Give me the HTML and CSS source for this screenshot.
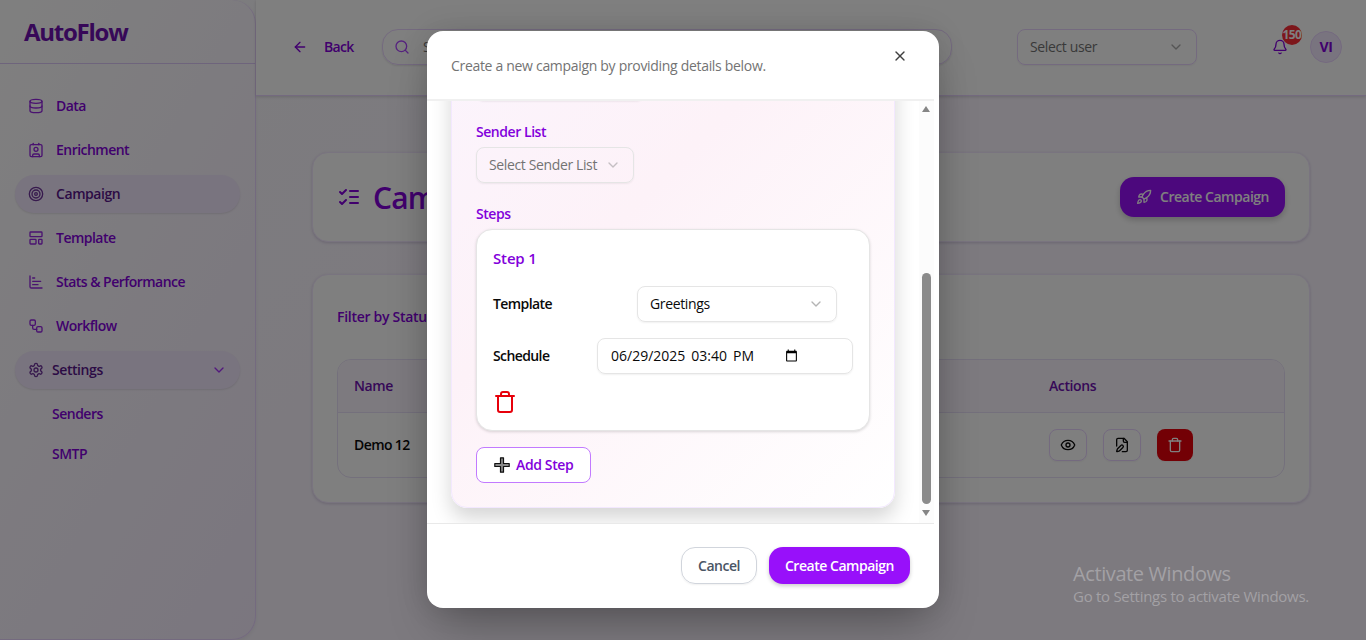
FILE: index.html
```html
<!DOCTYPE html>
<html lang="en">
<head>
<meta charset="utf-8">
<title>AutoFlow</title>
<link rel="stylesheet" href="styles.css">
</head>
<body>
<svg class="sprite" aria-hidden="true">
  <symbol id="chevron" viewBox="0 0 24 24"><path d="m6 9 6 6 6-6"/></symbol>
  <symbol id="trash" viewBox="0 0 24 24"><path d="M3 6h18"/><path d="M19 6v14c0 1-1 2-2 2H7c-1 0-2-1-2-2V6"/><path d="M8 6V4c0-1 1-2 2-2h4c1 0 2 1 2 2v2"/></symbol>
</svg>
<div class="app">
  <aside class="sidebar">
    <div class="brand"><span>AutoFlow</span></div>
    <nav class="nav">
      <a class="nav-item"><svg class="icon" viewBox="0 0 24 24"><ellipse cx="12" cy="5" rx="9" ry="3"/><path d="M3 5V19A9 3 0 0 0 21 19V5"/><path d="M3 12A9 3 0 0 0 21 12"/></svg><span>Data</span></a>
      <a class="nav-item"><svg class="icon" viewBox="0 0 24 24"><path d="M16 2v2"/><path d="M7 22v-2a2 2 0 0 1 2-2h6a2 2 0 0 1 2 2v2"/><path d="M8 2v2"/><circle cx="12" cy="11" r="3"/><rect x="3" y="4" width="18" height="18" rx="2"/></svg><span>Enrichment</span></a>
      <a class="nav-item active"><svg class="icon" viewBox="0 0 24 24"><circle cx="12" cy="12" r="10"/><circle cx="12" cy="12" r="6"/><circle cx="12" cy="12" r="2"/></svg><span>Campaign</span></a>
      <a class="nav-item"><svg class="icon" viewBox="0 0 24 24"><rect width="18" height="7" x="3" y="3" rx="1"/><rect width="9" height="7" x="3" y="14" rx="1"/><rect width="5" height="7" x="16" y="14" rx="1"/></svg><span>Template</span></a>
      <a class="nav-item"><svg class="icon" viewBox="0 0 24 24"><path d="M3 3v16a2 2 0 0 0 2 2h16"/><path d="M7 16h8"/><path d="M7 11h12"/><path d="M7 6h3"/></svg><span>Stats &amp; Performance</span></a>
      <a class="nav-item"><svg class="icon" viewBox="0 0 24 24"><rect width="8" height="8" x="3" y="3" rx="2"/><path d="M7 11v4a2 2 0 0 0 2 2h4"/><rect width="8" height="8" x="13" y="13" rx="2"/></svg><span>Workflow</span></a>
      <a class="nav-item active group"><svg class="icon" viewBox="0 0 24 24"><path d="M12.22 2h-.44a2 2 0 0 0-2 2v.18a2 2 0 0 1-1 1.73l-.43.25a2 2 0 0 1-2 0l-.15-.08a2 2 0 0 0-2.73.73l-.22.38a2 2 0 0 0 .73 2.73l.15.1a2 2 0 0 1 1 1.72v.51a2 2 0 0 1-1 1.74l-.15.09a2 2 0 0 0-.73 2.73l.22.38a2 2 0 0 0 2.73.73l.15-.08a2 2 0 0 1 2 0l.43.25a2 2 0 0 1 1 1.73V20a2 2 0 0 0 2 2h.44a2 2 0 0 0 2-2v-.18a2 2 0 0 1 1-1.73l.43-.25a2 2 0 0 1 2 0l.15.08a2 2 0 0 0 2.73-.73l.22-.39a2 2 0 0 0-.73-2.73l-.15-.08a2 2 0 0 1-1-1.74v-.5a2 2 0 0 1 1-1.74l.15-.09a2 2 0 0 0 .73-2.73l-.22-.38a2 2 0 0 0-2.73-.73l-.15.08a2 2 0 0 1-2 0l-.43-.25a2 2 0 0 1-1-1.73V4a2 2 0 0 0-2-2z"/><circle cx="12" cy="12" r="3"/></svg><span>Settings</span><svg class="icon caret"><use href="#chevron"/></svg></a>
      <a class="sub-item">Senders</a>
      <a class="sub-item">SMTP</a>
    </nav>
  </aside>
  <div class="page">
    <header class="topbar">
      <button class="back"><svg class="icon" viewBox="0 0 24 24"><path d="m12 19-7-7 7-7"/><path d="M19 12H5"/></svg><span>Back</span></button>
      <div class="search"><svg class="icon" viewBox="0 0 24 24"><circle cx="11" cy="11" r="8"/><path d="m21 21-4.3-4.3"/></svg><span>Search</span></div>
      <div class="user-select"><span>Select user</span><svg class="icon muted"><use href="#chevron"/></svg></div>
      <div class="bell"><svg class="icon" viewBox="0 0 24 24"><path d="M10.268 21a2 2 0 0 0 3.464 0"/><path d="M3.262 15.326A1 1 0 0 0 4 17h16a1 1 0 0 0 .74-1.673C19.41 13.956 18 12.499 18 8A6 6 0 0 0 6 8c0 4.499-1.411 5.956-2.738 7.326"/></svg><span class="badge">150</span></div>
      <div class="avatar">VI</div>
    </header>
    <main class="main">
      <section class="card title-card">
        <svg class="icon" viewBox="0 0 24 24"><path d="m3 17 2 2 4-4"/><path d="m3 7 2 2 4-4"/><path d="M13 6h8"/><path d="M13 12h8"/><path d="M13 18h8"/></svg>
        <h1>Campaigns</h1>
        <button class="primary"><svg class="icon" viewBox="0 0 24 24"><path d="M4.5 16.5c-1.5 1.26-2 5-2 5s3.74-.5 5-2c.71-.84.7-2.13-.09-2.91a2.18 2.18 0 0 0-2.91-.09z"/><path d="m12 15-3-3a22 22 0 0 1 2-3.95A12.88 12.88 0 0 1 22 2c0 2.72-.78 7.5-6 11a22.35 22.35 0 0 1-4 2z"/><path d="M9 12H4s.55-3.03 2-4c1.62-1.08 5 0 5 0"/><path d="M12 15v5s3.03-.55 4-2c1.08-1.62 0-5 0-5"/></svg><span>Create Campaign</span></button>
      </section>
      <section class="card list-card">
        <div class="filter">Filter by Status:</div>
        <div class="table">
          <div class="row head"><span>Name</span><span>Actions</span></div>
          <div class="row"><span>Demo 12</span>
            <div class="actions">
              <button class="act"><svg class="icon" viewBox="0 0 24 24"><path d="M2.062 12.348a1 1 0 0 1 0-.696 10.75 10.75 0 0 1 19.876 0 1 1 0 0 1 0 .696 10.75 10.75 0 0 1-19.876 0"/><circle cx="12" cy="12" r="3"/></svg></button>
              <button class="act"><svg class="icon" viewBox="0 0 24 24"><path d="M12.5 22H18a2 2 0 0 0 2-2V7l-5-5H6a2 2 0 0 0-2 2v9.5"/><path d="M14 2v4a2 2 0 0 0 2 2h4"/><path d="M13.378 15.626a1 1 0 1 0-3.004-3.004l-5.01 5.012a2 2 0 0 0-.506.854l-.837 2.87a.5.5 0 0 0 .62.62l2.87-.837a2 2 0 0 0 .854-.506z"/></svg></button>
              <button class="act danger"><svg class="icon"><use href="#trash"/></svg></button>
            </div>
          </div>
        </div>
      </section>
    </main>
  </div>
</div>

<div class="overlay">
  <div class="modal">
    <header class="modal-head">
      <p>Create a new campaign by providing details below.</p>
      <svg class="icon close" viewBox="0 0 24 24"><path d="M18 6 6 18"/><path d="m6 6 12 12"/></svg>
    </header>
    <div class="modal-body">
      <div class="viewport">
        <div class="panel">
          <div class="select previous"></div>
          <label class="label">Sender List</label>
          <div class="select sender"><span>Select Sender List</span><svg class="icon muted"><use href="#chevron"/></svg></div>
          <label class="label steps">Steps</label>
          <div class="step">
            <h3>Step 1</h3>
            <div class="field"><b>Template</b><div class="select template"><span>Greetings</span><svg class="icon muted"><use href="#chevron"/></svg></div></div>
            <div class="field"><b>Schedule</b><div class="select schedule"><span>06/29/2025</span><span>03:40</span><span>PM</span><svg class="calendar" viewBox="0 0 24 24"><path d="M20 3h-1V1h-2v2H7V1H5v2H4c-1.100 0-2 .9-2 2v16c0 1.100.9 2 2 2h16c1.100 0 2-.9 2-2V5c0-1.100-.9-2-2-2zm0 18H4V8h16v13z"/></svg></div></div>
            <svg class="icon remove"><use href="#trash"/></svg>
          </div>
          <button class="add"><svg class="plus" viewBox="0 0 16 16"><path d="M6.500 .8h3v5.700h5.700v3H9.500v5.700h-3V9.500H.8v-3h5.700z"/></svg><span>Add Step</span></button>
        </div>
      </div>
      <div class="scrollbar"><i class="up"></i><i class="thumb"></i><i class="down"></i></div>
    </div>
    <footer class="modal-foot">
      <button class="cancel"><span>Cancel</span></button>
      <button class="submit"><span>Create Campaign</span></button>
    </footer>
  </div>
</div>
<div class="watermark"><p class="wm-title">Activate Windows</p><p class="wm-text">Go to Settings to activate Windows.</p></div>
</body>
</html>
```
FILE: styles.css
```css
* { box-sizing: border-box; margin: 0; padding: 0; }
body {
  width: 1366px; height: 640px; overflow: hidden; position: relative;
  font-family: "Open Sans", "Noto Sans", sans-serif;
  font-size: 14px; line-height: 20px; letter-spacing: -0.37px; color: #0a0a0a;
}
button { font: inherit; letter-spacing: inherit; border: 0; background: none; color: inherit; }
span, p, h1, h3, b, label { white-space: nowrap; }
.sprite { display: none; }
.icon { width: 16px; height: 16px; flex: none; fill: none; stroke: currentColor; stroke-width: 2; stroke-linecap: round; stroke-linejoin: round; }
.muted { opacity: .4; }
.template .muted { opacity: .3; }
.app { display: flex; height: 640px; background: linear-gradient(135deg, #f9fafb, #faf5ff 35%, #faf5ff); }

.sidebar {
  width: 256px; height: 640px; flex: none; color: #8200db;
  border-right: 1px solid #e9d4ff; border-bottom: 1px solid #e9d4ff; border-radius: 0 24px 24px 0;
  background: linear-gradient(120deg, #fff, #faf5ff 50%, #f6edfe);
  box-shadow: 0 2px 4px rgba(0,0,0,.06);
}
.brand { height: 64px; padding: 16px 24px; border-bottom: 1px solid #dcc8f8; font-size: 24px; line-height: 32px; font-weight: 700; letter-spacing: -1.25px; color: #6e11b0; }
.nav { display: flex; flex-direction: column; gap: 6px; padding: 23px 15px; }
.nav-item { height: 38px; padding: 0 13px; display: flex; align-items: center; gap: 12px; border-radius: 19px; font-weight: 600; letter-spacing: -.53px; }
.nav-item.active { background: #f3e8ff; color: #59168b; box-shadow: 0 1px 2px rgba(0,0,0,.1); letter-spacing: -.43px; }
.nav-item.group { gap: 8px; }
.nav-item .icon { opacity: .85; }
.caret { margin-left: auto; color: #9810fa; }
.sub-item { height: 34px; line-height: 34px; padding-left: 37px; font-weight: 600; letter-spacing: -.5px; }
.nav-item.group + .sub-item { margin-top: 2px; }

.page { flex: 1; }
.topbar { height: 96px; display: flex; align-items: center; padding: 0 24px 2px 36px; background: #fff; border-bottom: 1px solid #e9d4ff; box-shadow: 0 1px 3px rgba(0,0,0,.15); color: #8200db; }
.back { display: flex; gap: 16px; align-items: center; width: 90px; font-weight: 600; letter-spacing: -.7px; }
.search { width: 570px; height: 36px; display: flex; align-items: center; gap: 13px; padding: 0 11px; border: 1px solid #e9d4ff; border-radius: 16px; color: #737373; box-shadow: 0 1px 2px rgba(0,0,0,.1); }
.search .icon { color: #ad46ff; }
.user-select { margin-left: 65px; width: 180px; height: 36px; padding: 0 12px; display: flex; align-items: center; justify-content: space-between; border: 1px solid #e9d4ff; border-radius: 8px; color: #737373; box-shadow: 0 1px 2px rgba(0,0,0,.06); }
.user-select .muted { opacity: .6; }
.bell { margin-left: auto; position: relative; display: flex; margin-right: 22px; }
.badge { position: absolute; left: 10px; top: -14px; width: 20px; height: 20px; border-radius: 50%; background: #fb2c36; color: #fff; font-size: 12px; font-weight: 700; line-height: 20px; text-align: center; letter-spacing: -.6px; }
.avatar { width: 32px; height: 32px; border-radius: 50%; border: 1px solid #e9d4ff; background: #f3e8ff; font-weight: 700; text-align: center; line-height: 30px; }

.main { padding: 56px; }
.card { width: 998px; background: #fff; border: 1px solid #f3e8ff; border-radius: 16px; padding: 24px; box-shadow: 0 1px 3px rgba(80,40,120,.2); }
.title-card { height: 90px; display: flex; align-items: center; color: #8200db; }
.title-card > .icon { width: 24px; height: 24px; }
h1 { margin-left: 12px; padding-top: 2px; font-size: 30px; line-height: 36px; font-weight: 600; letter-spacing: -.8px; }
.primary { margin-left: auto; width: 165px; height: 40px; display: flex; align-items: center; gap: 8px; padding: 0 16px; border-radius: 14px; background: #9810fa; color: #fff; font-weight: 600; letter-spacing: -.47px; box-shadow: 0 3px 6px rgba(0,0,0,.2); }
.list-card { margin-top: 32px; height: 229px; }
.filter { padding: 8px 0; color: #8200db; font-weight: 600; letter-spacing: -.28px; }
.table { margin-top: 24px; border: 1px solid #e9e0f8; border-radius: 14px; overflow: hidden; height: 119px; }
.row { display: grid; grid-template-columns: 695px 1fr; align-items: center; padding: 0 16px; height: 64px; font-weight: 600; letter-spacing: -.6px; }
.row.head { height: 53px; background: #faf5ff; border-bottom: 1px solid #e9e0f8; color: #6e11b0; letter-spacing: -.4px; }
.actions { display: flex; gap: 16px; }
.act { width: 38px; height: 32px; border: 1px solid #e9d4ff; border-radius: 8px; display: flex; align-items: center; justify-content: center; box-shadow: 0 1px 2px rgba(0,0,0,.05); }
.act.danger { width: 36px; border: 0; background: #e7000b; color: #fff; }

.overlay { position: absolute; inset: 0; background: rgba(0,0,0,.5); }
.modal { position: absolute; left: 427px; top: 31px; width: 512px; height: 577px; padding-right: 5px; display: flex; flex-direction: column; background: #fff; border-radius: 16px; box-shadow: 0 25px 50px -12px rgba(0,0,0,.3), 0 0 30px rgba(0,0,0,.12); }
.modal-head { height: 70px; flex: none; padding: 25px 24px; display: flex; justify-content: space-between; border-bottom: 2px solid #f0f0f0; color: #737373; }
.modal-head p { letter-spacing: -.31px; }
.close { margin-top: -8px; margin-right: 2px; color: #404040; }
.modal-body { display: flex; height: 422px; flex: none; }
.viewport { flex: 1; overflow: hidden; display: flex; flex-direction: column; justify-content: flex-end; padding: 0 24px 15px; }
.panel { flex: none; width: 444px; height: 680px; padding: 24px; display: flex; flex-direction: column; justify-content: flex-end; border: 1px solid #f3e8ff; border-radius: 16px; background: linear-gradient(135deg, #faf5ff, #fdf2f8 50%, #fff); box-shadow: 0 10px 20px rgba(0,0,0,.17); }
.select { height: 36px; flex: none; border: 1px solid #e5e5e5; border-radius: 8px; padding: 0 12px; display: flex; align-items: center; box-shadow: 0 1px 2px rgba(0,0,0,.06); }
.previous { width: 168px; margin-bottom: 21px; }
.label { color: #8200db; font-weight: 600; letter-spacing: -.45px; }
.sender { width: 158px; color: #737373; gap: 8px; margin-top: 5px; }
.steps { margin: 21px 0 5px; }
.step { height: 202px; flex: none; padding: 16px; border: 1px solid #e5e5e5; border-radius: 16px; background: #fff; box-shadow: 0 1px 3px rgba(0,0,0,.15); }
h3 { font-size: 15px; line-height: 24px; font-weight: 600; letter-spacing: -.15px; color: #8200db; }
.field { display: flex; justify-content: space-between; align-items: center; margin-top: 16px; }
.field b { font-weight: 600; letter-spacing: -.6px; }
.template { width: 200px; margin-right: 16px; justify-content: space-between; }
.schedule { width: 256px; padding: 0 13px; gap: 6px; letter-spacing: 0; }
.calendar { width: 13px; height: 13px; margin-left: 25px; margin-top: -1px; }
.remove { width: 24px; height: 24px; margin-top: 16px; color: #e7000b; }
.add { width: 115px; height: 36px; flex: none; margin-top: 16px; padding: 0 16px; display: flex; align-items: center; gap: 5px; border: 1px solid #c27aff; border-radius: 8px; background: #fff; color: #8200db; font-weight: 600; }
.plus { width: 18px; height: 16px; flex: none; fill: #888; stroke: #111; stroke-width: 1.200; stroke-linejoin: round; }
.scrollbar { width: 15px; flex: none; display: flex; flex-direction: column; align-items: center; padding: 5px 0; background: #fcfcfc; }
.up, .down { width: 0; height: 0; border: 4.500px solid transparent; margin-right: 1px; }
.up { border-top: 0; border-bottom: 6px solid #858585; }
.down { border-bottom: 0; border-top: 6px solid #858585; margin-top: 6px; }
.thumb { width: 9px; height: 231px; margin-top: 161px; border-radius: 5px; background: #8b8b8b; }
.modal-foot { flex: 1; padding: 23px 24px; border-top: 1px solid #e9e9e9; display: flex; justify-content: flex-end; gap: 12px; font-weight: 600; }
.cancel, .submit { height: 37px; border-radius: 14px; font-weight: 600; letter-spacing: -.47px; }
.cancel { width: 76px; border: 1px solid #d1d5dc; color: #4a5565; box-shadow: 0 1px 2px rgba(0,0,0,.06); }
.submit { width: 141px; background: #9810fa; color: #fff; box-shadow: 0 2px 4px rgba(0,0,0,.2); }

.watermark { position: absolute; left: 1073px; top: 562px; color: #a3a1a5; }
.wm-title { font-size: 20px; line-height: 24px; letter-spacing: -.4px; }
.wm-text { font-size: 15px; line-height: 21px; letter-spacing: -.28px; }
```
